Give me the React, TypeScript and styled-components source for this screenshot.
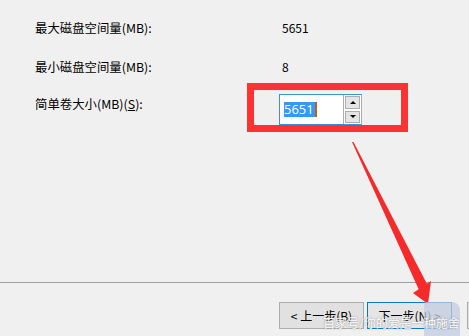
import styled, { createGlobalStyle } from 'styled-components';

const GlobalStyle = createGlobalStyle`
  html, body {
    margin: 0;
    padding: 0;
    background: #f0f0f0;
  }
`;

const Window = styled.div`
  position: relative;
  width: 469px;
  height: 336px;
  overflow: hidden;
  background: #f0f0f0;
  color: #000;
  font-family: "Noto Sans CJK SC", "Noto Sans", sans-serif;
  font-size: 12px;
  display: flex;
  flex-direction: column;
`;

const Form = styled.div`
  flex: 1;
  display: grid;
  grid-template-columns: 247px 1fr;
  grid-template-rows: 20px 20px 31px;
  row-gap: 19px;
  align-content: start;
  padding: 18px 0 0 35px;

  & > :nth-child(n + 5) {
    margin-top: -2px;
  }
`;

const Label = styled.div<{ $offset?: number }>`
  line-height: 20px;
  font-size: 12.4px;
  white-space: nowrap;
  margin-top: ${(p) => p.$offset ?? 0}px;
`;

const Value = styled.div`
  line-height: 20px;
`;

const Spinner = styled.div`
  display: flex;
  width: 83px;
  height: 31px;
  margin-left: -3px;
  box-sizing: border-box;
  border: 1px solid #3c8fdd;
  border-right-color: #adadad;
  background: #fff;
`;

const Field = styled.div`
  flex: 1;
  display: flex;
  align-items: center;
  padding-left: 4px;
`;

const Selected = styled.span`
  background: #3399ff;
  color: #fff;
  font-family: "Open Sans", "Noto Sans", sans-serif;
  font-size: 13px;
  line-height: 15px;
  padding: 0 1px 0 0;
  border-right: 2px solid #c06010;
`;

const SpinButtons = styled.div`
  width: 17px;
  display: flex;
  flex-direction: column;
  border-left: 1px solid #adadad;
`;

const SpinButton = styled.div<{ $down?: boolean }>`
  flex: 1;
  display: flex;
  align-items: center;
  justify-content: center;
  background: #e5e5e5;
  border: 1px solid #adadad;
  margin: 1px;

  &::after {
    content: '';
    width: 0;
    height: 0;
    border-left: 3px solid transparent;
    border-right: 3px solid transparent;
    ${(p) => (p.$down ? 'border-top: 3px solid #000;' : 'border-bottom: 3px solid #000;')}
  }
`;

const Separator = styled.div`
  height: 1px;
  background: #a0a0a0;
`;

const ButtonBar = styled.div`
  height: 53px;
  display: flex;
  gap: 3px;
  padding: 19px 0 0 279px;
  box-sizing: border-box;
`;

const Button = styled.div<{ $default?: boolean; $apart?: boolean }>`
  flex: none;
  width: 85px;
  height: 27px;
  box-sizing: border-box;
  display: flex;
  align-items: center;
  justify-content: center;
  margin-left: ${(p) => (p.$apart ? 12 : 0)}px;
  background: ${(p) => (p.$default ? '#e5e5e5' : '#e1e1e1')};
  border: 1px solid ${(p) => (p.$default ? '#0078d7' : '#adadad')};
  white-space: nowrap;
`;

const Underline = styled.span`
  text-decoration: underline;
`;

const Highlight = styled.div`
  position: absolute;
  left: 247px;
  top: 83px;
  width: 161px;
  height: 49px;
  box-sizing: border-box;
  border: 7px solid #fd3232;
  pointer-events: none;
`;

const Arrow = styled.svg`
  position: absolute;
  left: 0;
  top: 0;
`;

const Watermark = styled.div`
  position: absolute;
  left: 323px;
  top: 314px;
  color: rgba(255, 255, 255, 0.95);
  font-size: 12px;
  line-height: 18px;
  white-space: nowrap;
  text-shadow: 0 0 2px rgba(110, 110, 110, 0.7);
`;

const Logo = styled.div`
  position: absolute;
  left: 424px;
  top: 302px;
  width: 36px;
  height: 34px;
  border-radius: 3px 8px 0 0;
  background: rgba(195, 205, 225, 0.75);
`;

export default function App() {
  return (
    <Window>
      <GlobalStyle />
      <Form>
        <Label>最大磁盘空间量(MB):</Label>
        <Value>5651</Value>
        <Label>最小磁盘空间量(MB):</Label>
        <Value>8</Value>
        <Label $offset={3}>
          简单卷大小(MB)(<Underline>S</Underline>):
        </Label>
        <Spinner>
          <Field>
            <Selected>5651</Selected>
          </Field>
          <SpinButtons>
            <SpinButton />
            <SpinButton $down />
          </SpinButtons>
        </Spinner>
      </Form>
      <Separator />
      <ButtonBar>
        <Button>&lt; 上一步(B)</Button>
        <Button $default>下一步(N) &gt;</Button>
        <Button $apart />
      </ButtonBar>
      <Highlight />
      <Arrow width="469" height="336" viewBox="0 0 469 336">
        <polygon points="352,142 353.5,142 427,284 419,290" fill="#f52a2a" />
        <polygon points="413,293 431,281 428,304" fill="#f52a2a" />
      </Arrow>
      <Logo />
      <Watermark>百家号/你的爱是一种施舍</Watermark>
    </Window>
  );
}
